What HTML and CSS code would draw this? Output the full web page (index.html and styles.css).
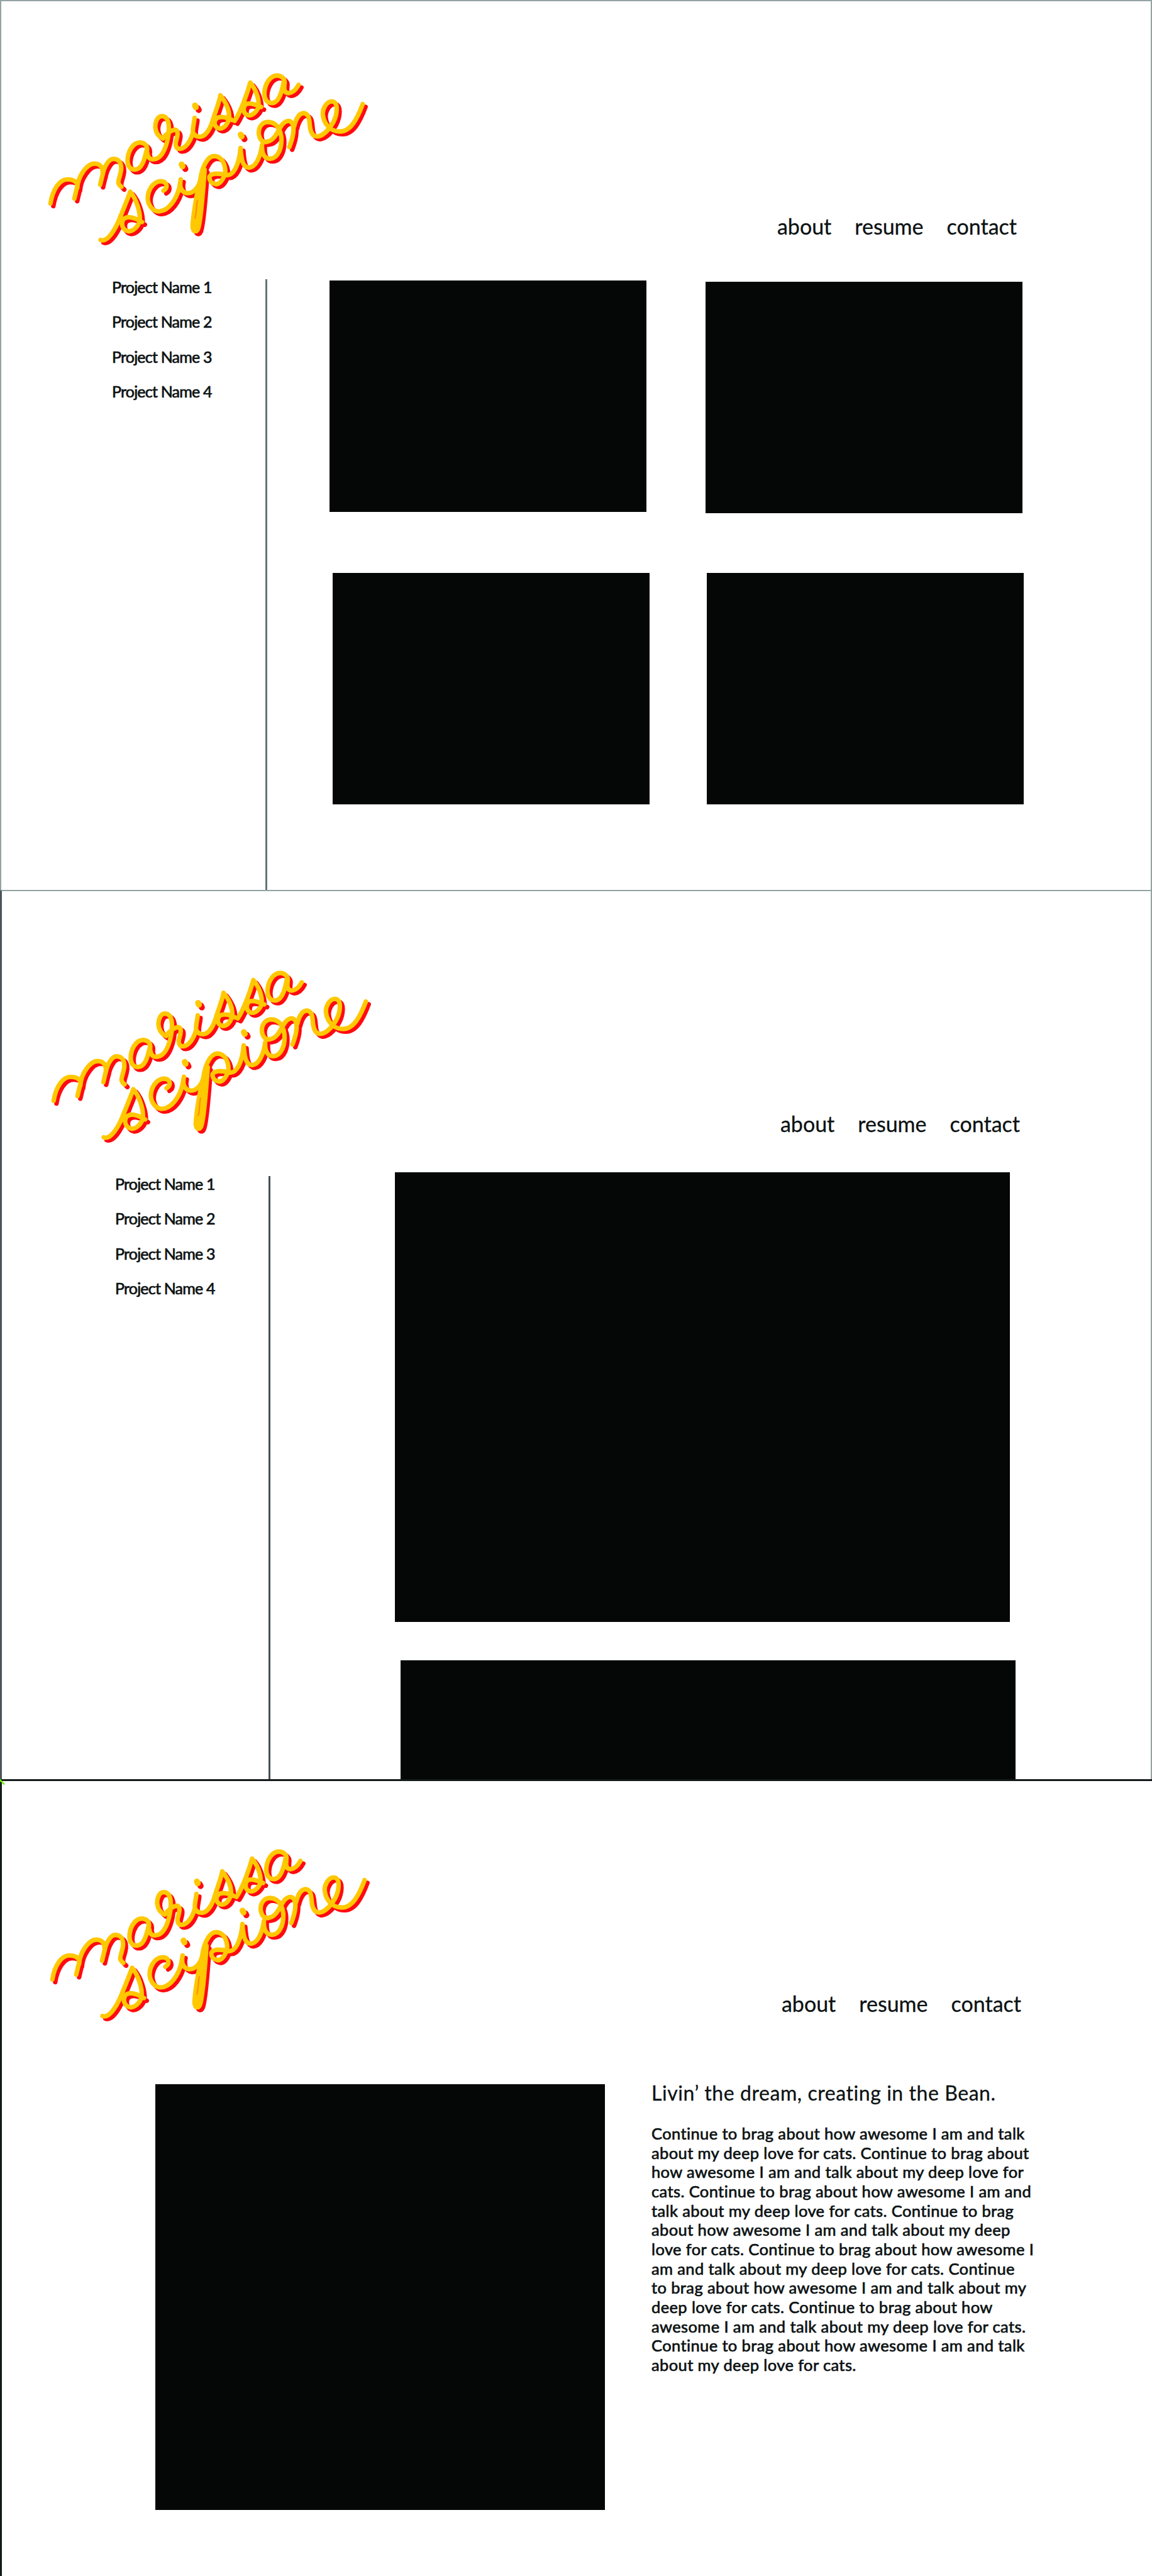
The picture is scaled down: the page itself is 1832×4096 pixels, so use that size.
FILE: index.html
```html
<!DOCTYPE html>
<html lang="en">
<head>
<meta charset="utf-8">
<title>Marissa Scipione</title>
<link rel="stylesheet" href="styles.css">
</head>
<body>
<svg class="defs" aria-hidden="true">
  <defs>
    <g id="lettering">
      <path d="M64 962C74 870 105 803 142 803C172 803 190 825 186 850L173 930M186 860C190 780 230 698 265 698C295 698 305 730 302 770L291 838M302 775C308 720 330 667 351 667C378 667 388 695 387 735C384 775 372 810 374 825C376 838 380 845 388 853"/>
      <path d="M505 610C508 575 490 558 472 558C440 558 416 620 416 680C416 715 430 740 450 738C480 735 492 680 503 610C508 640 508 668 530 670C570 672 590 600 600 530C608 470 610 384 572 383C550 383 541 430 543 460C546 500 560 520 577 532C590 505 610 480 632 472C655 480 640 530 636 560C634 580 640 602 655 600C685 598 705 540 714 495"/>
      <path d="M722 395C720 430 712 460 715 490C720 510 730 520 747 520C775 518 795 460 805 410C820 340 835 290 840 245C865 290 882 340 880 395C875 430 860 465 838 465C815 462 808 430 818 405C830 382 860 385 893 408"/>
      <path d="M905 415C935 350 965 220 976 160C1000 200 1015 260 1015 310C1012 345 990 378 970 378C948 375 940 340 952 310C965 290 990 300 1026 322"/>
      <path d="M1130 150C1122 210 1110 294 1075 296C1050 295 1040 265 1041 225C1044 165 1068 113 1098 113C1122 113 1136 140 1133 165C1130 200 1130 230 1152 230C1172 228 1188 200 1197 175"/>
      <path d="M293 1205C325 1225 360 1130 375 1080C400 990 420 920 428 885C455 930 475 1020 472 1075C465 1120 440 1148 420 1148C392 1140 385 1100 395 1072C410 1045 440 1050 482 1086"/>
      <path d="M580 878C600 860 600 820 570 815C530 815 508 880 508 930C510 980 535 1018 560 1015C605 1012 640 930 652 860L659 803C652 850 660 890 690 895C720 895 745 850 750 790C755 740 775 650 812 648C845 650 865 700 862 765C850 810 835 835 820 835C800 830 788 810 790 785C800 755 840 765 870 775C900 775 925 710 932 595C935 660 940 725 970 725C1000 722 1022 660 1030 575C1028 640 1045 668 1068 666C1105 662 1122 590 1118 520C1113 460 1090 422 1058 421C1030 422 1015 455 1015 495C1017 540 1035 562 1055 552C1085 545 1100 490 1115 455C1130 415 1150 410 1160 418C1180 440 1178 500 1155 588"/>
      <path d="M1177 450C1185 400 1200 364 1220 363C1250 368 1245 420 1250 465C1255 500 1265 518 1282 518C1315 515 1340 460 1355 425C1375 370 1380 287 1350 285C1322 285 1305 340 1308 375C1312 430 1340 485 1385 485C1435 485 1465 400 1490 303"/>
      <path d="M768 740C762 850 755 1020 742 1110C735 1165 712 1155 713 1110C716 1040 724 970 736 880M748 840C738 930 735 1030 725 1130"/>
      <path class="dot" d="M724 312L728 324M663 704L667 716M933 506L937 518"/>
    </g>
    <symbol id="logo" viewBox="0 0 1568 1320" preserveAspectRatio="none">
      <use href="#lettering" class="shade" x="13" y="18"/>
      <use href="#lettering" class="face"/>
      <path class="nick" d="M735 945C728 985 733 1025 724 1060"/>
    </symbol>
  </defs>
</svg>

<section class="panel home">
  <header class="masthead">
    <svg class="logo" role="img" aria-label="marissa scipione"><use href="#logo"/></svg>
    <nav class="nav"><a>about</a><a>resume</a><a>contact</a></nav>
  </header>
  <div class="body">
    <ul class="projects"><li>Project Name 1</li><li>Project Name 2</li><li>Project Name 3</li><li>Project Name 4</li></ul>
    <main class="columns">
      <div class="column"><div class="thumb"></div><div class="thumb inset"></div></div>
      <div class="column second"><div class="thumb"></div><div class="thumb inset"></div></div>
    </main>
  </div>
</section>

<section class="panel project">
  <header class="masthead">
    <svg class="logo" role="img" aria-label="marissa scipione"><use href="#logo"/></svg>
    <nav class="nav"><a>about</a><a>resume</a><a>contact</a></nav>
  </header>
  <div class="body">
    <ul class="projects"><li>Project Name 1</li><li>Project Name 2</li><li>Project Name 3</li><li>Project Name 4</li></ul>
    <main class="shots"><div class="shot"></div><div class="shot next"></div></main>
  </div>
</section>

<section class="panel about">
  <svg class="corner" viewBox="0 0 10 14" aria-hidden="true"><path d="M0 1L7 8.5M0 0V4"/></svg>
  <header class="masthead">
    <svg class="logo" role="img" aria-label="marissa scipione"><use href="#logo"/></svg>
    <nav class="nav"><a>about</a><a>resume</a><a>contact</a></nav>
  </header>
  <main class="bio">
    <div class="portrait"></div>
    <article class="story">
      <h1>Livin’ the dream, creating in the Bean.</h1>
      <p>Continue to brag about how awesome I am and talk<br>about my deep love for cats. Continue to brag about<br>how awesome I am and talk about my deep love for<br>cats. Continue to brag about how awesome I am and<br>talk about my deep love for cats. Continue to brag<br>about how awesome I am and talk about my deep<br>love for cats. Continue to brag about how awesome I<br>am and talk about my deep love for cats. Continue<br>to brag about how awesome I am and talk about my<br>deep love for cats. Continue to brag about how<br>awesome I am and talk about my deep love for cats.<br>Continue to brag about how awesome I am and talk<br>about my deep love for cats.</p>
    </article>
  </main>
</section>
</body>
</html>
```

FILE: styles.css
```css
* { box-sizing: border-box; }

body {
  margin: 0;
  background: #fff;
  color: #0c1213;
  font-family: Lato, "Open Sans", sans-serif;
  font-variant-ligatures: none;
}

.defs { position: absolute; width: 0; height: 0; }

.panel {
  position: relative;
  width: 1832px;
  display: flex;
  flex-direction: column;
}
.home { height: 1415px; border: 2px solid #93a2a2; border-bottom: 0; }
.project { height: 1414px; border: solid #93a2a2; border-width: 2px 2px 0 3px; border-left-color: #4a5658; overflow: hidden; }
.about { height: 1267px; border: solid #14191a; border-width: 3px 0 0 3px; }

.masthead {
  display: flex;
  align-items: flex-start;
  justify-content: space-between;
  flex: none;
}
.home .masthead { height: 442px; padding: 91px 213px 0 56px; }
.project .masthead { height: 453px; padding: 103px 208px 0 60px; }
.about .masthead { height: 482px; padding: 85px 208px 0 58px; }

.logo { width: 546px; height: 316px; overflow: visible; }
.shade, .face, .nick { fill: none; stroke-linecap: round; stroke-linejoin: round; }
#lettering path { vector-effect: non-scaling-stroke; }
.shade { stroke: #ff0a12; stroke-width: 7.2px; }
.face { stroke: #ffc800; stroke-width: 7.2px; }
#lettering .dot { stroke-width: 9.5px; }
.nick { stroke: #ff8a00; stroke-width: 2px; vector-effect: non-scaling-stroke; }

.nav {
  display: flex;
  gap: 37px;
  padding-top: 247px;
  font-size: 34px;
  line-height: 40px;
  -webkit-text-stroke: 0.3px #0c1213;
}
.about .nav { padding-top: 249px; }

.body { display: flex; flex: 1; min-height: 0; }

.projects {
  flex: none;
  list-style: none;
  margin: 0;
  padding: 0;
  font-size: 25px;
  line-height: 55.4px;
  letter-spacing: -0.8px;
  -webkit-text-stroke: 0.7px #0c1213;
  border-right: 3px solid #647474;
}
.home .projects { width: 423px; padding-left: 176px; }
.project .projects { width: 427px; padding-left: 180px; border-color: #454f51; }
.projects li:first-child { margin-top: -15px; }

.columns { display: flex; gap: 89px; padding: 2px 0 0 99px; }
.column { display: flex; flex-direction: column; gap: 97px; }
.second { padding-top: 2px; gap: 95px; }
.thumb { width: 504px; height: 368px; background: #050706; }
.column .inset { margin-left: 5px; }
.second .inset { margin-left: 2px; }

.shots { display: flex; flex-direction: column; gap: 61px; padding-left: 198px; margin-top: -6px; }
.shot { flex: none; width: 978px; height: 715px; background: #050706; }
.next { margin-left: 9px; }

.corner { position: absolute; left: -3px; top: -3px; width: 10px; height: 14px; fill: none; stroke: #6cf000; stroke-width: 2.5; }

.bio { display: flex; padding-left: 244px; gap: 74px; }
.portrait { flex: none; width: 715px; height: 677px; background: #050706; }
.story { flex: none; width: 640px; }
.story h1 {
  margin: -6px 0 29px 0;
  font-size: 32px;
  font-weight: 400;
  line-height: 40px;
  letter-spacing: 0.56px;
  -webkit-text-stroke: 0.3px #0c1213;
}
.story p {
  margin: 0;
  font-size: 25.5px;
  line-height: 30.66px;
  white-space: nowrap;
  letter-spacing: 0.38px;
  -webkit-text-stroke: 0.7px #0c1213;
}
```
